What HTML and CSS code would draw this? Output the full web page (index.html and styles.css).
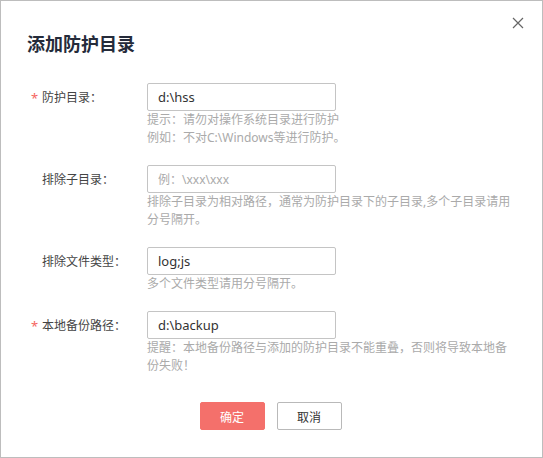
FILE: index.html
```html
<!DOCTYPE html>
<html lang="zh-CN">
<head>
<meta charset="utf-8">
<title>添加防护目录</title>
<link rel="stylesheet" href="styles.css">
</head>
<body>
<div class="dialog">
  <button class="close" aria-label="关闭">
    <svg width="12" height="12" viewBox="0 0 12 12"><path d="M1 1L11 11M11 1L1 11" stroke="#666" stroke-width="1.2" fill="none"/></svg>
  </button>
  <h1 class="title">添加防护目录</h1>
  <div class="form">
    <div class="row">
      <label class="label required">防护目录：</label>
      <div class="field">
        <input class="input" type="text" value="d:\hss">
        <div class="hint">提示：请勿对操作系统目录进行防护<br>例如：不对C:\Windows等进行防护。</div>
      </div>
    </div>
    <div class="row">
      <label class="label">排除子目录：</label>
      <div class="field">
        <input class="input" type="text" placeholder="例：\xxx\xxx">
        <div class="hint">排除子目录为相对路径，通常为防护目录下的子目录,多个子目录请用分号隔开。</div>
      </div>
    </div>
    <div class="row">
      <label class="label">排除文件类型：</label>
      <div class="field">
        <input class="input" type="text" value="log;js">
        <div class="hint">多个文件类型请用分号隔开。</div>
      </div>
    </div>
    <div class="row">
      <label class="label required">本地备份路径：</label>
      <div class="field">
        <input class="input" type="text" value="d:\backup">
        <div class="hint">提醒：本地备份路径与添加的防护目录不能重叠，否则将导致本地备份失败！</div>
      </div>
    </div>
  </div>
  <div class="actions">
    <button class="btn btn-primary">确定</button>
    <button class="btn btn-default">取消</button>
  </div>
</div>
</body>
</html>
```
FILE: styles.css
```css
* { box-sizing: border-box; }
html, body { margin: 0; padding: 0; background: #fff; }
body {
  font-family: "Noto Sans", "Noto Sans CJK SC", sans-serif;
  color: #333;
}
.dialog {
  position: relative;
  width: 543px;
  height: 458px;
  border: 1px solid #bdbdbd;
  background: #fff;
  padding: 30px 0 0 0;
}
.close {
  position: absolute;
  top: 16px;
  right: 18px;
  width: 12px;
  height: 12px;
  padding: 0;
  border: 0;
  background: none;
  display: flex;
}
.title {
  margin: 0 0 0 26px;
  font-size: 18px;
  line-height: 24px;
  font-weight: 700;
  color: #252b3a;
  font-family: "Noto Sans CJK SC", sans-serif;
}
.form {
  margin-top: 28px;
  padding-left: 41px;
}
.row {
  display: flex;
  margin-bottom: 18px;
}
.label {
  position: relative;
  width: 105px;
  flex: none;
  font-size: 12px;
  line-height: 28px;
  color: #444;
  font-family: "Noto Sans CJK SC", sans-serif;
}
.label.required::before {
  content: "*";
  position: absolute;
  left: -11px;
  top: 1px;
  color: #f5655f;
  font-size: 13px;
  font-family: "Noto Sans", sans-serif;
}
.field {
  width: 370px;
}
.input {
  display: block;
  width: 189px;
  height: 28px;
  border: 1px solid #c4c4c4;
  border-radius: 2px;
  padding: 0 10px;
  font-size: 13px;
  font-family: "Noto Sans", "Noto Sans CJK SC", sans-serif;
  color: #333;
  outline: none;
}
.input::placeholder {
  color: #aaa;
  font-size: 12px;
}
.hint {
  margin-top: 0;
  font-size: 12px;
  line-height: 18px;
  color: #aaa;
}
.actions {
  display: flex;
  justify-content: center;
  gap: 12px;
  margin-top: 27px;
  padding-right: 2px;
}
.btn {
  width: 65px;
  height: 28px;
  border-radius: 2px;
  font-size: 12px;
  font-family: "Noto Sans CJK SC", sans-serif;
  padding: 0;
}
.btn-primary {
  background: #f4706b;
  border: 1px solid #f4706b;
  color: #fff;
}
.btn-default {
  background: #fff;
  border: 1px solid #b9b9b9;
  color: #333;
}
```
